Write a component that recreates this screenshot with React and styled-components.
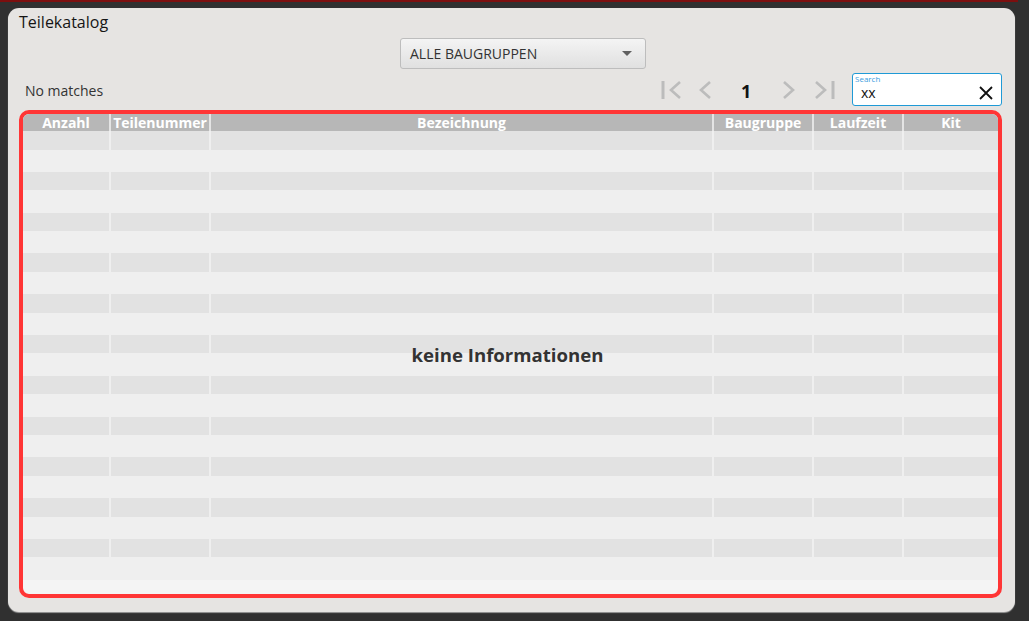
import React from "react";
import styled, { createGlobalStyle } from "styled-components";

const Global = createGlobalStyle`
  html, body { margin: 0; padding: 0; }
  body {
    background: #303030;
    font-family: "Open Sans", "Noto Sans", sans-serif;
    width: 1029px;
    height: 621px;
    overflow: hidden;
  }
`;

const Screen = styled.div`
  width: 1029px;
  height: 621px;
  display: flex;
  flex-direction: column;
`;

const TopStrip = styled.div`
  height: 2px;
  width: 1018px;
  background: #7c0f0f;
`;

const Stage = styled.div`
  flex: 1;
  display: flex;
  padding: 6px 14px 9px 8px;
`;

const Panel = styled.section`
  flex: 1;
  display: flex;
  flex-direction: column;
  background: #e6e4e2;
  border-radius: 11px;
  box-shadow: 0 1px 1px #9c9c9c;
  padding: 3px 13px 14px 11px;
`;

const Title = styled.h1`
  margin: 0;
  font-size: 16px;
  font-weight: 400;
  line-height: 22px;
  color: #151515;
`;

const GroupRow = styled.div`
  display: flex;
  margin-top: 5px;
  padding-left: 381px;
`;

const Select = styled.div`
  width: 246px;
  height: 31px;
  box-sizing: border-box;
  border: 1px solid #bdbdbd;
  border-radius: 3px;
  background: linear-gradient(#f4f4f4, #e0e0e0);
  display: flex;
  align-items: center;
  justify-content: space-between;
  padding: 0 13px 0 9px;
  font-size: 14px;
  color: #333;
`;

const Caret = styled.span`
  width: 0;
  height: 0;
  border-left: 5px solid transparent;
  border-right: 5px solid transparent;
  border-top: 5px solid #606060;
`;

const Toolbar = styled.div`
  display: flex;
  align-items: center;
  height: 33px;
  margin-top: 4px;
`;

const Status = styled.span`
  font-size: 14px;
  color: #333;
  padding-left: 6px;
  margin-top: 2px;
  flex: 1;
`;

const Pager = styled.div`
  display: flex;
  align-items: center;
  margin-right: 17px;
`;

const PageButton = styled.button`
  border: 0;
  background: none;
  padding: 0;
  margin-left: ${(p) => p.$gap}px;
  width: ${(p) => p.$w}px;
  height: 20px;
  display: flex;
  align-items: center;
  justify-content: center;
  cursor: pointer;
`;

const PageNumber = styled.span`
  margin-left: 29px;
  width: 10px;
  font-size: 18px;
  font-weight: 700;
  color: #111;
  line-height: 20px;
  margin-top: 2px;
`;

const SearchBox = styled.div`
  position: relative;
  width: 150px;
  height: 33px;
  box-sizing: border-box;
  border: 1px solid #1f9ad6;
  border-radius: 3px;
  background: #fff;
  display: flex;
  align-items: center;
  padding: 6px 8px 0 8px;
`;

const SearchLabel = styled.span`
  position: absolute;
  left: 2px;
  top: 0;
  font-size: 8px;
  line-height: 10px;
  color: #3a9de0;
`;

const SearchInput = styled.span`
  flex: 1;
  font-size: 14px;
  color: #111;
  line-height: 16px;
`;

const Table = styled.div`
  position: relative;
  flex: 1;
  margin-top: 4px;
  border: 4px solid #ff3535;
  border-radius: 10px;
  overflow: hidden;
  display: flex;
  flex-direction: column;
  background: #f4f4f4;
`;

const cols = "86px 100px 503px 100px 90px 1fr";

const HeaderRow = styled.div`
  display: grid;
  grid-template-columns: ${cols};
  height: 17px;
  background: #b7b7b7;
`;

const HeadCell = styled.div`
  border-left: ${(p) => (p.$first ? "0" : "2px solid #e4e4e4")};
  color: #fff;
  font-weight: 700;
  font-size: 14px;
  line-height: 17px;
  text-align: center;
  white-space: nowrap;
`;

const BodyRow = styled.div`
  display: grid;
  grid-template-columns: ${cols};
  height: ${(p) => (p.$odd ? 22.3 : 18.5)}px;
  background: ${(p) => (p.$odd ? "#efefef" : "#e2e2e2")};
`;

const Cell = styled.div`
  border-left: ${(p) => (p.$first ? "0" : "2px solid #efefef")};
`;

const Placeholder = styled.div`
  position: absolute;
  inset: 0;
  display: flex;
  align-items: center;
  justify-content: center;
  padding-right: 6px;
  font-size: 18.6px;
  font-weight: 700;
  color: #333;
  pointer-events: none;
`;

const headers = ["Anzahl", "Teilenummer", "Bezeichnung", "Baugruppe", "Laufzeit", "Kit"];

const Chevron = ({ dir, bar }) => {
  const left = dir === "left";
  return (
    <svg width={bar ? 21 : 13} height="20" viewBox={bar ? "0 0 21 20" : "0 0 13 20"} fill="none">
      {bar && (
        <line
          x1={left ? 2 : 19}
          y1="1"
          x2={left ? 2 : 19}
          y2="19"
          stroke="#bcbcbc"
          strokeWidth="3"
        />
      )}
      <polyline
        points={
          bar
            ? left
              ? "19,2 10,10 19,18"
              : "2,2 11,10 2,18"
            : left
            ? "11,2 2,10 11,18"
            : "2,2 11,10 2,18"
        }
        stroke="#bcbcbc"
        strokeWidth="2.6"
        fill="none"
      />
    </svg>
  );
};

const CloseIcon = () => (
  <svg width="14" height="14" viewBox="0 0 14 14">
    <path d="M1 1 L13 13 M13 1 L1 13" stroke="#111" strokeWidth="1.8" />
  </svg>
);

export default function App() {
  const rows = Array.from({ length: 22 }, (_, i) => i);
  return (
    <Screen>
      <Global />
      <TopStrip />
      <Stage>
        <Panel>
          <Title>Teilekatalog</Title>
          <GroupRow>
            <Select>
              <span>ALLE BAUGRUPPEN</span>
              <Caret />
            </Select>
          </GroupRow>
          <Toolbar>
            <Status>No matches</Status>
            <Pager>
              <PageButton $w={21} $gap={0}>
                <Chevron dir="left" bar />
              </PageButton>
              <PageButton $w={13} $gap={17}>
                <Chevron dir="left" />
              </PageButton>
              <PageNumber>1</PageNumber>
              <PageButton $w={13} $gap={31}>
                <Chevron dir="right" />
              </PageButton>
              <PageButton $w={21} $gap={19}>
                <Chevron dir="right" bar />
              </PageButton>
            </Pager>
            <SearchBox>
              <SearchLabel>Search</SearchLabel>
              <SearchInput>xx</SearchInput>
              <CloseIcon />
            </SearchBox>
          </Toolbar>
          <Table>
            <HeaderRow>
              {headers.map((h, i) => (
                <HeadCell key={h} $first={i === 0}>
                  {h}
                </HeadCell>
              ))}
            </HeaderRow>
            {rows.map((r) => (
              <BodyRow key={r} $odd={r % 2 === 1}>
                {headers.map((h, i) => (
                  <Cell key={h} $first={i === 0} />
                ))}
              </BodyRow>
            ))}
            <Placeholder>keine Informationen</Placeholder>
          </Table>
        </Panel>
      </Stage>
    </Screen>
  );
}
